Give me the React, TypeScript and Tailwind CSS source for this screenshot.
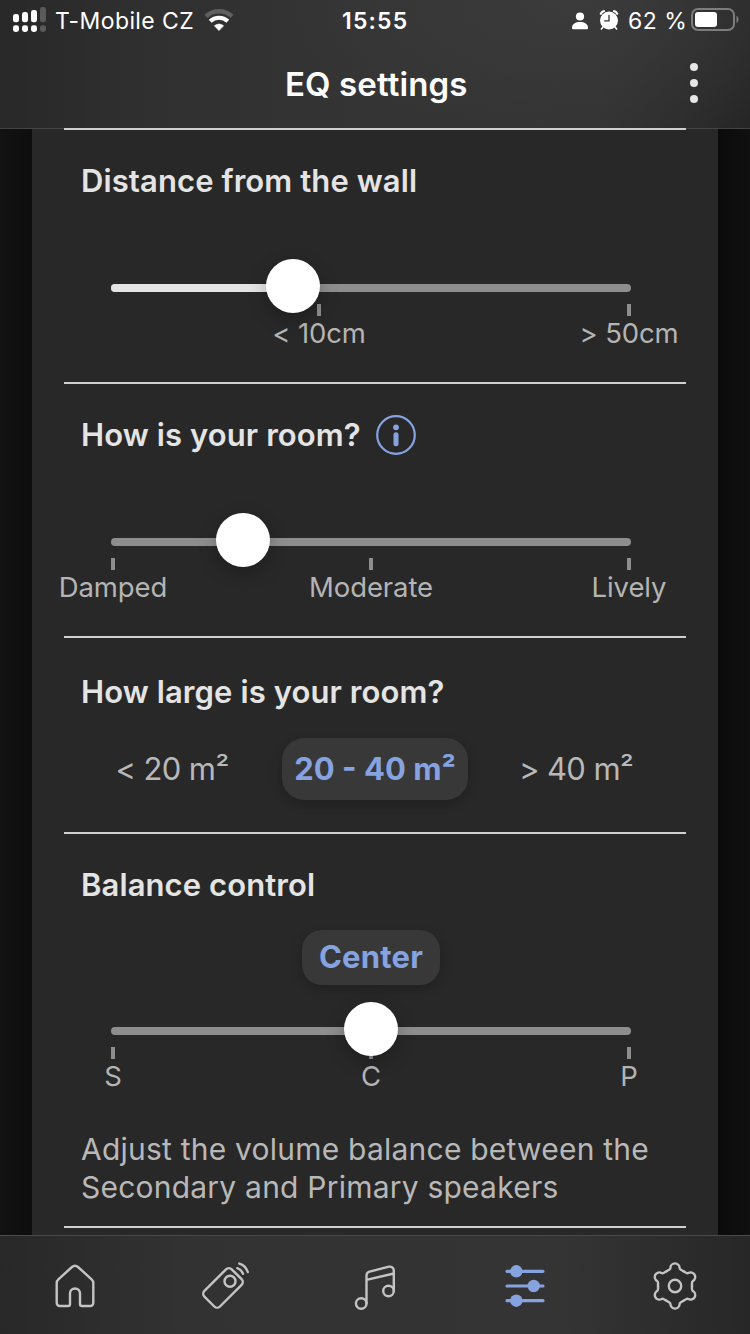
import { ReactNode } from "react";

type Tick = { label: string };

function SignalIcon() {
  const bars = [
    { x: 0, top: 7, on: true },
    { x: 9, top: 5, on: true },
    { x: 18, top: 3, on: true },
    { x: 27, top: 0, on: false },
  ];
  return (
    <svg width="33" height="25" viewBox="0 0 33 25">
      {bars.map((b) => (
        <g key={b.x} fill={b.on ? "#ffffff" : "#5a5a5a"}>
          <rect x={b.x} y={b.top} width="6" height={15.3 - b.top} rx="2.4" />
          <rect x={b.x} y="18.2" width="6" height="6.8" rx="2.4" />
        </g>
      ))}
    </svg>
  );
}

function WifiIcon() {
  return (
    <svg width="30" height="24" viewBox="0 0 30 24" fill="none">
      <path d="M2 8.300A19.300 19.300 0 0 1 28 8.300" stroke="#5f5f5f" strokeWidth="4.400" />
      <path d="M6.200 13.200a13 13 0 0 1 17.600 0" stroke="#fff" strokeWidth="4.200" />
      <path d="M15 22.600l-4.600-4.800a7 7 0 0 1 9.200 0z" fill="#fff" stroke="#fff" strokeWidth="0.600" strokeLinejoin="round" />
    </svg>
  );
}

function PersonIcon() {
  return (
    <svg width="16" height="18" viewBox="0 0 16 18" fill="#fff">
      <circle cx="8" cy="4.500" r="4.100" />
      <path d="M0 16c0-4.200 3.600-6 8-6s8 1.800 8 6c0 .8-.4 1.200-1.200 1.200H1.200C.4 17.200 0 16.800 0 16z" />
    </svg>
  );
}

function AlarmIcon() {
  return (
    <svg width="20" height="20" viewBox="0 0 20 20" fill="none">
      <circle cx="10" cy="10.500" r="9" fill="#fff" />
      <path d="M1.800 3.700C2.400 2.400 3.600 1.400 5 1.200M18.200 3.700c-.6-1.300-1.800-2.300-3.200-2.500" stroke="#fff" strokeWidth="2.200" strokeLinecap="round" />
      <path d="M4.400 16.500l-2 2.500M15.600 16.500l2 2.500" stroke="#fff" strokeWidth="1.600" strokeLinecap="round" />
      <path d="M10 5.300v5.500H5.600" stroke="#333" strokeWidth="1.300" strokeLinecap="round" />
    </svg>
  );
}

function BatteryIcon() {
  return (
    <svg width="48" height="23" viewBox="0 0 48 23" fill="none">
      <rect x="1" y="1" width="42" height="21" rx="6" stroke="#7d7d7d" strokeWidth="2" />
      <rect x="4" y="4" width="22" height="15" rx="3" fill="#fff" />
      <path d="M45.500 8c1.400.6 2 1.900 2 3.500s-.6 2.900-2 3.500z" fill="#7d7d7d" />
    </svg>
  );
}

function InfoIcon() {
  return (
    <svg width="40" height="40" viewBox="0 0 40 40" fill="none">
      <circle cx="20" cy="20" r="18.800" stroke="#86a3e0" strokeWidth="2.200" />
      <circle cx="20" cy="12.300" r="2.900" fill="#86a3e0" />
      <path d="M20 19.700v9" stroke="#86a3e0" strokeWidth="5" strokeLinecap="round" />
    </svg>
  );
}

function NavIcon({ children, color = "#c4c4c4" }: { children: ReactNode; color?: string }) {
  return (
    <svg
      width="48"
      height="48"
      viewBox="0 0 48 48"
      fill="none"
      stroke={color}
      strokeWidth="2.400"
      strokeLinecap="round"
      strokeLinejoin="round"
      className="overflow-visible"
    >
      {children}
    </svg>
  );
}

function HomeIcon() {
  return (
    <NavIcon>
      <path d="M8.700 44H17a2 2 0 0 0 2-2V31.500a5 5 0 0 1 10 0V42a2 2 0 0 0 2 2h8.300a3 3 0 0 0 3-3V21a5 5 0 0 0-1.700-3.700L27 5a4.500 4.500 0 0 0-6 0L7.400 17.300A5 5 0 0 0 5.700 21V41a3 3 0 0 0 3 3z" />
    </NavIcon>
  );
}

function RemoteIcon() {
  return (
    <NavIcon>
      <rect x="2.700" y="14.900" width="38.600" height="22" rx="4" transform="rotate(-45 22 25.900)" />
      <circle cx="29" cy="19.200" r="5.500" />
      <path d="M36.300 6.200c2.600.9 4.700 3 5.700 5.600M38.300 1.600c4 1.200 7.200 4.400 8.500 8.400" />
    </NavIcon>
  );
}

function MusicIcon() {
  return (
    <NavIcon>
      <path d="M15.500 41.500V13.500a4 4 0 0 1 3.100-3.900L37.900 4.700a4 4 0 0 1 4.900 3.900V29M15.500 17.800L42.800 11.500" />
      <circle cx="10.200" cy="41.500" r="5.300" />
      <circle cx="37.500" cy="29" r="5.300" />
    </NavIcon>
  );
}

function EqIcon() {
  return (
    <NavIcon color="#86a3e0">
      <path d="M6 9.300h36M6 24h36M6 38.700h36" strokeWidth="3.200" />
      <g fill="#86a3e0" stroke="none">
        <circle cx="15.300" cy="9.300" r="6.200" />
        <circle cx="32.700" cy="24" r="6.200" />
        <circle cx="15.300" cy="38.700" r="6.200" />
      </g>
    </NavIcon>
  );
}

function GearIcon() {
  return (
    <NavIcon>
      <g transform="translate(24 24)">
        {[0, 60, 120, 180, 240, 300].map((angle) => (
          <path
            key={angle}
            transform={`rotate(${angle})`}
            d="M-8.500-14.700L-5.900-16.200Q-4.600-17-4.600-18a4.600 4.600 0 0 1 9.200 0Q4.600-17 5.900-16.200L8.500-14.700"
          />
        ))}
        <circle r="6.200" />
      </g>
    </NavIcon>
  );
}

function Divider() {
  return <div className="mx-8 h-0.5 shrink-0 bg-[#d0d0d0]" />;
}

function SectionTitle({ children }: { children: ReactNode }) {
  return <h2 className="text-[31px] leading-10 font-semibold tracking-[0.100px] whitespace-nowrap text-[#e4e4e4]">{children}</h2>;
}

function Slider({ value, ticks, filled = false, offset = 0 }: { value: number; ticks: Tick[]; filled?: boolean; offset?: number }) {
  return (
    <div className="ml-[79px] w-[520px]">
      <div className="relative h-2 rounded-full bg-[#8e8e8e]">
        {filled && <div className="h-2 rounded-full bg-[#e4e4e4]" style={{ width: value }} />}
        <div
          className="absolute -top-[25px] z-10 size-[54px] -translate-x-1/2 rounded-full bg-white shadow-[0_6px_18px_rgba(0,0,0,0.25)]"
          style={{ left: value }}
        />
      </div>
      <div className="mt-3 flex justify-between" style={{ marginLeft: offset }}>
        {ticks.map((tick) => (
          <div key={tick.label} className="flex w-1 flex-col items-center">
            <div className="h-3 w-1 bg-[#8e8e8e]" />
            <span className="mt-0.5 text-[27.500px] leading-[30px] tracking-[-0.100px] whitespace-nowrap text-[#b4b4b4]">{tick.label}</span>
          </div>
        ))}
      </div>
    </div>
  );
}

export default function App() {
  return (
    <div className="flex h-[1334px] w-[750px] flex-col overflow-hidden bg-[#0e0e0e] font-['Inter','Liberation_Sans',sans-serif]">
      <header className="h-[128px] shrink-0 bg-[radial-gradient(ellipse_300px_150px_at_570px_0px,#3b3b3b_0%,#33333300_100%),linear-gradient(90deg,#282828_0%,#303030_20%,#343434_50%,#333333_80%,#262626_100%)]">
        <div className="flex h-[39px] items-center text-[23px] text-white">
          <div className="flex w-[342px] items-center pl-[13px]">
            <SignalIcon />
            <span className="ml-[9px] w-[140px] pt-[3px] tracking-[0.400px] whitespace-nowrap">T-Mobile CZ</span>
            <span className="ml-[9px]">
              <WifiIcon />
            </span>
          </div>
          <span className="w-[67px] pt-[3px] font-semibold tracking-[1.200px] whitespace-nowrap">15:55</span>
          <div className="ml-[163px] flex items-center">
            <span className="pt-[2px]">
              <PersonIcon />
            </span>
            <span className="ml-[11px]">
              <AlarmIcon />
            </span>
            <span className="ml-[9px] w-[59px] pt-[3px] tracking-[0.500px] whitespace-nowrap">62 %</span>
            <span className="ml-[4px]">
              <BatteryIcon />
            </span>
          </div>
        </div>
        <div className="flex h-[88px] items-center pl-[285px]">
          <h1 className="w-[183px] pt-[3px] text-[33px] font-semibold tracking-[0.100px] whitespace-nowrap text-white">EQ settings</h1>
          <button className="ml-[222px] flex flex-col gap-2">
            <span className="size-2 rounded-full bg-[#e6e6e6]" />
            <span className="size-2 rounded-full bg-[#e6e6e6]" />
            <span className="size-2 rounded-full bg-[#e6e6e6]" />
          </button>
        </div>
      </header>

      <div className="flex h-[1107px] shrink-0 border-t border-[#444444] bg-[linear-gradient(90deg,#121212_0%,#0d0d0d_5%,#0b0b0b_96%,#101010_100%)]">
        <main className="ml-8 flex w-[686px] flex-col bg-[#282828]">
          {/* first rule sits on top of the header border */}
          <div className="-mt-px">
            <Divider />
          </div>
          <section className="h-[252px] shrink-0 pt-[31px]">
            <div className="mb-[83px] pl-[49px]">
              <SectionTitle>Distance from the wall</SectionTitle>
            </div>
            <Slider value={182} filled offset={206} ticks={[{ label: "< 10cm" }, { label: "> 50cm" }]} />
          </section>

          <Divider />
          <section className="h-[252px] shrink-0 pt-[31px]">
            <div className="mb-[83px] flex items-center pl-[49px]">
              <div className="w-[295px]">
                <SectionTitle>How is your room?</SectionTitle>
              </div>
              <InfoIcon />
            </div>
            <Slider value={132} ticks={[{ label: "Damped" }, { label: "Moderate" }, { label: "Lively" }]} />
          </section>

          <Divider />
          <section className="h-[194px] shrink-0 pt-[34px]">
            <div className="pl-[49px]">
              <SectionTitle>How large is your room?</SectionTitle>
            </div>
            <div className="mt-[26px] flex h-[62px] items-center pl-[48px] text-[31px] whitespace-nowrap text-[#b8b8b8]">
              <button className="w-[184px] text-center tracking-[-0.600px]">&lt; 20 m²</button>
              <button className="ml-[18px] h-[62px] w-[186px] rounded-[22px] bg-[#383838] text-center font-bold text-[#86a3e0] shadow-[0_4px_12px_rgba(0,0,0,0.2)]">
                20 - 40 m²
              </button>
              <button className="ml-4 w-[184px] text-center tracking-[-0.600px]">&gt; 40 m²</button>
            </div>
          </section>

          <Divider />
          <section className="h-[392px] shrink-0 pt-[31px]">
            <div className="pl-[49px]">
              <SectionTitle>Balance control</SectionTitle>
            </div>
            <div className="mt-[25px] ml-[270px] flex h-[55px] w-[138px] items-center justify-center rounded-[20px] bg-[#383838] text-[31px] font-bold tracking-[0.200px] text-[#86a3e0] shadow-[0_4px_12px_rgba(0,0,0,0.2)]">
              Center
            </div>
            <div className="mt-[42px]">
              <Slider value={260} ticks={[{ label: "S" }, { label: "C" }, { label: "P" }]} />
            </div>
            <p className="mt-[39px] pl-[49px] text-[30px] leading-[38px] tracking-[0.220px] whitespace-nowrap text-[#b8b8b8]">
              Adjust the volume balance between the
              <br />
              Secondary and Primary speakers
            </p>
          </section>
          <Divider />
        </main>
      </div>

      <nav className="grid h-[99px] shrink-0 grid-cols-5 items-center justify-items-center border-t border-[#4a4a4a] bg-[linear-gradient(90deg,#282828_0%,#323232_25%,#343434_75%,#272727_100%)] [&>button]:mt-[2px]">
        <button>
          <HomeIcon />
        </button>
        <button>
          <RemoteIcon />
        </button>
        <button>
          <MusicIcon />
        </button>
        <button>
          <EqIcon />
        </button>
        <button>
          <GearIcon />
        </button>
      </nav>
    </div>
  );
}
